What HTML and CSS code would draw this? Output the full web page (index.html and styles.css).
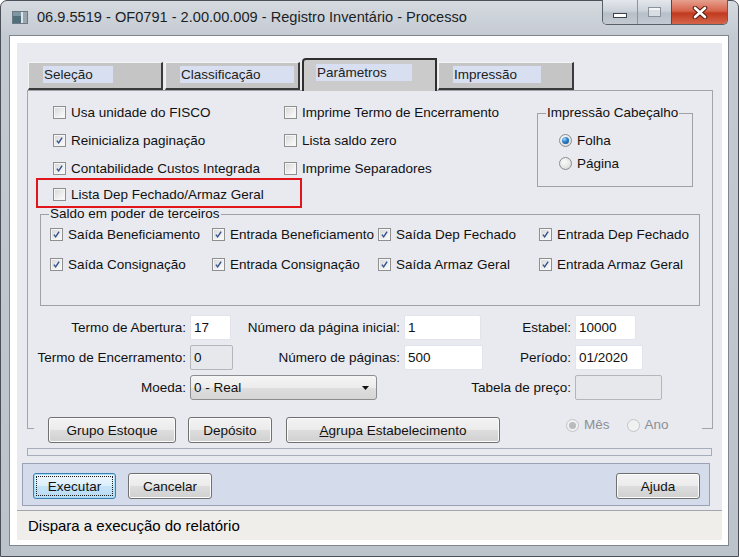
FILE: index.html
```html
<!doctype html>
<html lang="pt-BR">
  <head>
    <meta charset="UTF-8" />
    <title>Registro Inventário - Processo</title>
    <link rel="stylesheet" href="styles.css">
  </head>
  <body>
    <div class="window">
      <div class="titlebar">
        <svg class="app-icon" viewBox="0 0 16 13" width="16" height="13">
          <rect x="0.5" y="0.5" width="15" height="12" fill="#dfe4e8" stroke="#6d7a84" />
          <rect x="1" y="1" width="8" height="11" fill="#4f6f7d" />
          <rect x="1" y="1" width="8" height="4" fill="#7a97a3" />
          <rect x="11" y="1" width="4" height="11" fill="#9aa6ae" />
        </svg>
        <span class="title">06.9.5519 - OF0791 - 2.00.00.009 - Registro Inventário - Processo</span>
        <div class="caption-buttons">
          <span class="cap-btn cap-min"><i></i></span>
          <span class="cap-btn cap-max"><i></i></span>
          <span class="cap-btn cap-close">
            <svg viewBox="0 0 18 13" width="18" height="13">
              <path d="M4 2 L14 11 M14 2 L4 11" stroke="#5b1b10" stroke-width="4.6" stroke-linecap="round" fill="none" />
              <path d="M4 2 L14 11 M14 2 L4 11" stroke="#fff" stroke-width="2.6" stroke-linecap="round" fill="none" />
            </svg>
          </span>
        </div>
      </div>

      <div class="client">
        <div class="main">
          <div class="tabs">
            <div class="tab"><span class="tab-label lbl-sel">Seleção</span></div>
            <div class="tab"><span class="tab-label lbl-cla">Classificação</span></div>
            <div class="tab active"><span class="tab-label lbl-par">Parâmetros</span></div>
            <div class="tab last"><span class="tab-label lbl-imp">Impressão</span></div>
          </div>

          <div class="tab-page">
            <div class="top-options">
              <div class="opt-col col-1">
                <div class="check"><span class="cb"></span>Usa unidade do FISCO</div>
                <div class="check"><span class="cb on"><svg viewBox="0 0 13 13"><path d="M3.4 6.6 L5.5 9.3 L9.6 3.2" /></svg></span>Reinicializa paginação</div>
                <div class="check"><span class="cb on"><svg viewBox="0 0 13 13"><path d="M3.4 6.6 L5.5 9.3 L9.6 3.2" /></svg></span>Contabilidade Custos Integrada</div>
                <div class="check"><span class="cb"></span>Lista Dep Fechado/Armaz Geral</div>
              </div>
              <div class="opt-col col-2">
                <div class="check"><span class="cb"></span>Imprime Termo de Encerramento</div>
                <div class="check"><span class="cb"></span>Lista saldo zero</div>
                <div class="check"><span class="cb"></span>Imprime Separadores</div>
              </div>
              <fieldset class="group group-header">
                <legend>Impressão Cabeçalho</legend>
                <div class="radio-list">
                  <div class="radio"><span class="rb on"></span>Folha</div>
                  <div class="radio"><span class="rb"></span>Página</div>
                </div>
              </fieldset>
            </div>

            <fieldset class="group group-saldo">
              <legend>Saldo em poder de terceiros</legend>
              <div class="saldo-grid">
                <div class="check"><span class="cb on"><svg viewBox="0 0 13 13"><path d="M3.4 6.6 L5.5 9.3 L9.6 3.2" /></svg></span>Saída Beneficiamento</div>
                <div class="check"><span class="cb on"><svg viewBox="0 0 13 13"><path d="M3.4 6.6 L5.5 9.3 L9.6 3.2" /></svg></span>Entrada Beneficiamento</div>
                <div class="check"><span class="cb on"><svg viewBox="0 0 13 13"><path d="M3.4 6.6 L5.5 9.3 L9.6 3.2" /></svg></span>Saída Dep Fechado</div>
                <div class="check"><span class="cb on"><svg viewBox="0 0 13 13"><path d="M3.4 6.6 L5.5 9.3 L9.6 3.2" /></svg></span>Entrada Dep Fechado</div>
                <div class="check"><span class="cb on"><svg viewBox="0 0 13 13"><path d="M3.4 6.6 L5.5 9.3 L9.6 3.2" /></svg></span>Saída Consignação</div>
                <div class="check"><span class="cb on"><svg viewBox="0 0 13 13"><path d="M3.4 6.6 L5.5 9.3 L9.6 3.2" /></svg></span>Entrada Consignação</div>
                <div class="check"><span class="cb on"><svg viewBox="0 0 13 13"><path d="M3.4 6.6 L5.5 9.3 L9.6 3.2" /></svg></span>Saída Armaz Geral</div>
                <div class="check"><span class="cb on"><svg viewBox="0 0 13 13"><path d="M3.4 6.6 L5.5 9.3 L9.6 3.2" /></svg></span>Entrada Armaz Geral</div>
              </div>
            </fieldset>

            <div class="form-grid">
              <span class="field-label">Termo de Abertura:</span>
              <span class="input w41">17</span>
              <span class="field-label">Número da página inicial:</span>
              <span class="input w77">1</span>
              <span class="field-label">Estabel:</span>
              <span class="input w61">10000</span>

              <span class="field-label">Termo de Encerramento:</span>
              <span class="input disabled w43">0</span>
              <span class="field-label">Número de páginas:</span>
              <span class="input w79">500</span>
              <span class="field-label">Período:</span>
              <span class="input w68">01/2020</span>

              <span class="field-label">Moeda:</span>
              <span class="select">0 - Real
                <svg viewBox="0 0 7 4" width="7" height="4"><path d="M0 0 H7 L3.5 4 Z" fill="#111" /></svg>
              </span>
              <span class="field-label">Tabela de preço:</span>
              <span class="input disabled w87"></span>
            </div>

            <div class="actions">
              <span class="btn w128">Grupo Estoque</span>
              <span class="btn w84">Depósito</span>
              <span class="btn w214"><u>A</u>grupa Estabelecimento</span>
              <div class="period">
                <div class="radio off"><span class="rb on"></span>Mês</div>
                <div class="radio off"><span class="rb"></span>Ano</div>
              </div>
            </div>

            <div class="highlight"></div>
          </div>

          <div class="strip"></div>

          <div class="button-bar">
            <span class="btn focus w83">Executar</span>
            <span class="btn w84">Cancelar</span>
            <span class="btn w84 push-right">Ajuda</span>
          </div>
        </div>
        <div class="status">Dispara a execução do relatório</div>
      </div>
    </div>
  </body>
</html>
```

FILE: styles.css
```css
* {
  box-sizing: border-box;
}

body {
  margin: 0;
  width: 739px;
  height: 557px;
  overflow: hidden;
  font-family: 'Liberation Sans', Arial, sans-serif;
  font-size: 13.5px;
  color: #111;
  background: #fff;
}

.window {
  width: 739px;
  height: 557px;
  padding: 0 10px 11px 9px;
  border: 1px solid #4b5058;
  border-radius: 7px 7px 0 0;
  background: linear-gradient(to bottom, #d5dae0 0, #c4cad2 36px, #bcc3cb 100%);
  display: flex;
  flex-direction: column;
}

/* title bar */
.titlebar {
  height: 35px;
  flex-shrink: 0;
  display: flex;
  align-items: center;
}

.app-icon {
  margin: 0 0 2px 2px;
}

.title {
  margin: 0 0 3px 9px;
  font-size: 14.6px;
  color: #1b1f26;
  white-space: nowrap;
}

.caption-buttons {
  align-self: flex-start;
  margin-left: auto;
  margin-top: -1px;
  display: flex;
  height: 25px;
  border: 1px solid #58606a;
  border-top: none;
  border-radius: 0 0 5px 5px;
  overflow: hidden;
}

.cap-btn {
  display: flex;
  justify-content: center;
  align-items: center;
  background: linear-gradient(to bottom, #e3e7ec 0, #ccd2d9 45%, #b7bfc8 55%, #c3cad2 100%);
}

.cap-min {
  width: 34px;
  align-items: flex-end;
  padding-bottom: 6px;
}

.cap-min i {
  width: 14px;
  height: 5px;
  background: #fff;
  border: 1px solid #3b424b;
}

.cap-max {
  width: 34px;
  border-left: 1px solid #8c949e;
}

.cap-max i {
  width: 13px;
  height: 10px;
  border: 1px solid #89919b;
  background: #d9dee4;
  box-shadow: inset 0 2px 0 #f2f4f6;
}

.cap-close {
  width: 56px;
  border-left: 1px solid #7a3a2e;
  background: linear-gradient(to bottom, #e6a08f 0, #d6654c 45%, #c13b20 55%, #d5644a 100%);
}

/* client area */
.client {
  flex: 1;
  background: #fff;
  padding: 7px 6px 5px 7px;
  box-shadow: 0 0 0 1px #7f868f;
  display: flex;
  flex-direction: column;
}

.main {
  height: 467px;
  flex-shrink: 0;
  background: #e8eaf0;
  padding: 15px 9px 4px 10px;
}

.status {
  height: 30px;
  border-top: 1px solid #a3a6ab;
  background: #f0eeeb;
  padding-left: 11px;
  font-size: 15px;
  line-height: 30px;
  color: #000;
}

/* tabs */
.tabs {
  display: flex;
  align-items: flex-end;
  gap: 2px;
  height: 32px;
  padding-left: 1px;
  position: relative;
  z-index: 1;
}

.tab {
  width: 135px;
  height: 28px;
  background: #c5c5c5;
  border-top: 1px solid #f4f4f4;
  border-left: 1px solid #f4f4f4;
  border-right: 2px solid #3a3a3a;
  border-bottom: 2px solid #3a3a3a;
  padding: 3px 0 0 14px;
  color: #222;
}

.tab.active {
  height: 33px;
  margin-bottom: -1px;
  border: 2px solid #2f2f2f;
  border-bottom: none;
  border-radius: 4px 0 0 0;
  background: #cbcbcb;
  padding: 4px 0 0 12px;
}

.tab.last {
  margin-left: -1px;
  width: 136px;
}

.tab-label {
  display: block;
  height: 17px;
  line-height: 18px;
  padding-left: 1px;
  background: #d7dff0;
  white-space: nowrap;
}

.lbl-sel { width: 70px; }
.lbl-cla { width: 114px; }
.lbl-par { width: 96px; }
.lbl-imp { width: 88px; }

/* tab page */
.tab-page {
  position: relative;
  height: 338px;
  border: 1px solid #9fa4ad;
  border-bottom: none;
}

.tab-page::before,
.tab-page::after {
  content: '';
  position: absolute;
  bottom: -1px;
  height: 1px;
  background: #9fa4ad;
}

.tab-page::before {
  left: -1px;
  width: 7px;
}

.tab-page::after {
  right: -1px;
  width: 11px;
}

.highlight {
  position: absolute;
  left: 8px;
  top: 87px;
  width: 266px;
  height: 30px;
  border: 2px solid #e0161b;
}

.top-options {
  display: flex;
  padding: 7px 0 0 25px;
}

.opt-col {
  display: grid;
  grid-template-rows: 28px 28px 28px 24px;
  align-content: start;
}

.col-1 { width: 231px; }
.col-2 { width: 253px; }

.check,
.radio {
  display: flex;
  align-items: center;
  gap: 5px;
  white-space: nowrap;
}

.cb {
  width: 13px;
  height: 13px;
  flex-shrink: 0;
  border: 1px solid #8e8f8f;
  background: linear-gradient(135deg, #d6d6d6 0, #f3f3f3 70%, #fbfbfb 100%);
  box-shadow: inset 0 0 0 1px #f6f6f6;
}

.cb svg {
  display: block;
  width: 11px;
  height: 11px;
  margin: 0;
}

.cb svg path {
  fill: none;
  stroke: #33508f;
  stroke-width: 1.7;
}

.rb {
  width: 13px;
  height: 13px;
  flex-shrink: 0;
  border: 1px solid #8a8c8e;
  border-radius: 50%;
  background: radial-gradient(circle at 40% 35%, #fafafa 0, #e6e6e6 55%, #cfcfcf 100%);
  display: flex;
  justify-content: center;
  align-items: center;
}

.rb.on::after {
  content: '';
  width: 7px;
  height: 7px;
  border-radius: 50%;
  background: radial-gradient(circle at 35% 30%, #a9dcff 0, #2f86cf 40%, #0d3f78 100%);
}

/* group boxes */
.group {
  margin: 0;
  padding: 0;
  min-width: 0;
  border: 1px solid #9da1a9;
}

.group legend {
  margin-left: 8px;
  padding: 0 1px;
  line-height: 16px;
  height: 16px;
  white-space: nowrap;
}

.group-header {
  width: 156px;
  margin-top: 7px;
  align-self: flex-start;
}

.radio-list {
  display: grid;
  grid-template-rows: 23px 23px;
  padding: 8px 0 11px 21px;
}

.group-saldo {
  width: 660px;
  margin-left: 12px;
}

.saldo-grid {
  display: grid;
  grid-template-columns: 162px 166px 161px 1fr;
  grid-template-rows: 24px 24px;
  row-gap: 6px;
  padding: 0 0 29px 9px;
}

/* fields */
.form-grid {
  display: grid;
  grid-template-columns: 162px 60px 154px 56px 115px 1fr;
  grid-template-rows: 25px 25px 25px;
  row-gap: 5px;
  margin-top: 9px;
  align-items: center;
}

.field-label {
  justify-self: end;
  padding-right: 4px;
  white-space: nowrap;
}

.input {
  height: 25px;
  display: flex;
  align-items: center;
  padding-left: 3px;
  background: #fff;
  border: 1px solid #e1e4ec;
  border-radius: 2px;
  white-space: nowrap;
}

.input.disabled {
  background: #e6e8ec;
  border-color: #b3b6bb;
}

.w41 { width: 41px; }
.w43 { width: 43px; }
.w61 { width: 61px; }
.w68 { width: 68px; }
.w77 { width: 77px; }
.w79 { width: 79px; }
.w87 { width: 87px; }

.select {
  grid-column: 2 / 5;
  width: 187px;
  height: 25px;
  display: flex;
  align-items: center;
  justify-content: space-between;
  padding: 0 7px 0 3px;
  border: 1px solid #8b8d90;
  border-radius: 3px;
  background: linear-gradient(to bottom, #f5f5f5 0, #ececec 50%, #dedede 51%, #d6d6d6 100%);
}

/* buttons */
.btn {
  height: 26px;
  display: flex;
  justify-content: center;
  align-items: center;
  border: 1px solid #707070;
  border-radius: 3px;
  background: linear-gradient(to bottom, #f3f3f3 0, #ebebeb 50%, #dddddd 51%, #d0d0d0 100%);
  box-shadow: inset 0 0 0 1px #fbfbfb;
  white-space: nowrap;
}

.btn.focus {
  border-color: #3c7fb1;
  background: linear-gradient(to bottom, #eef7fd 0, #dcefFB 50%, #c6e4f8 51%, #b8dcf4 100%);
  box-shadow: inset 0 0 0 1px #a9dcf7;
  outline: 1px dotted #1e1e1e;
  outline-offset: -4px;
}

.w83 { width: 83px; }
.w84 { width: 84px; }
.w128 { width: 128px; }
.w214 { width: 214px; }

.actions {
  display: flex;
  align-items: flex-start;
  gap: 12px;
  margin-top: 17px;
  padding-left: 20px;
}

.actions .w214 {
  margin-left: 2px;
}

.period {
  display: flex;
  gap: 17px;
  margin-left: 54px;
  line-height: 16px;
}

.radio.off {
  color: #8d8f93;
}

.radio.off .rb {
  border-color: #c2c4c6;
  background: #f1f1f1;
}

.radio.off .rb.on::after {
  background: #b9bbbe;
}

.strip {
  height: 8px;
  width: 685px;
  margin-top: 20px;
  border: 1px solid #a6aebd;
}

.button-bar {
  display: flex;
  gap: 12px;
  width: 688px;
  height: 43px;
  margin: 7px 0 0 -5px;
  padding: 9px 9px 0 10px;
  background: #d4dcec;
  border: 1px solid #9aa3b5;
}

.push-right {
  margin-left: auto;
}
```
